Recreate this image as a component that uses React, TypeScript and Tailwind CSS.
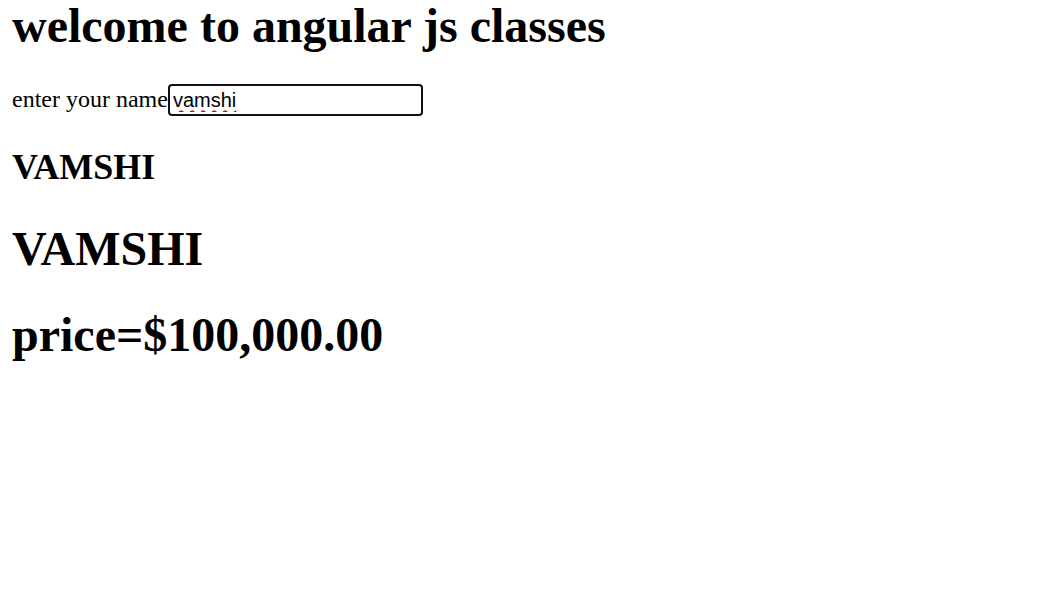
import React from 'react';

const serif = "font-['Liberation_Serif','Times_New_Roman',serif]";

export default function App() {
  const name = 'vamshi';

  return (
    <div className={`min-h-[589px] w-full bg-white px-[12px] text-black ${serif}`}>
      <h1 className="text-[48px] font-bold leading-[52px]">welcome to angular js classes</h1>

      <div className="mt-[32px] flex h-[32px] items-center">
        <span className="pb-[2px] text-[24px] leading-[22px]">enter your name</span>
        <input
          type="text"
          defaultValue={name}
          spellCheck={false}
          className="box-border h-[32px] w-[255px] rounded-[4px] border-[2.5px] border-[#111] bg-white px-[3px] font-['Liberation_Sans',Arial,sans-serif] text-[20px] leading-[24px] text-black underline decoration-red-600 decoration-wavy decoration-[1.5px] underline-offset-[3px] outline-none"
        />
      </div>

      <h2 className="mt-[30px] text-[36px] font-bold leading-[42px]">{name.toUpperCase()}</h2>
      <h1 className="mt-[34px] text-[48px] font-bold leading-[54px]">{name.toUpperCase()}</h1>
      <h1 className="mt-[32px] text-[48px] font-bold leading-[54px]">price=$100,000.00</h1>
    </div>
  );
}
